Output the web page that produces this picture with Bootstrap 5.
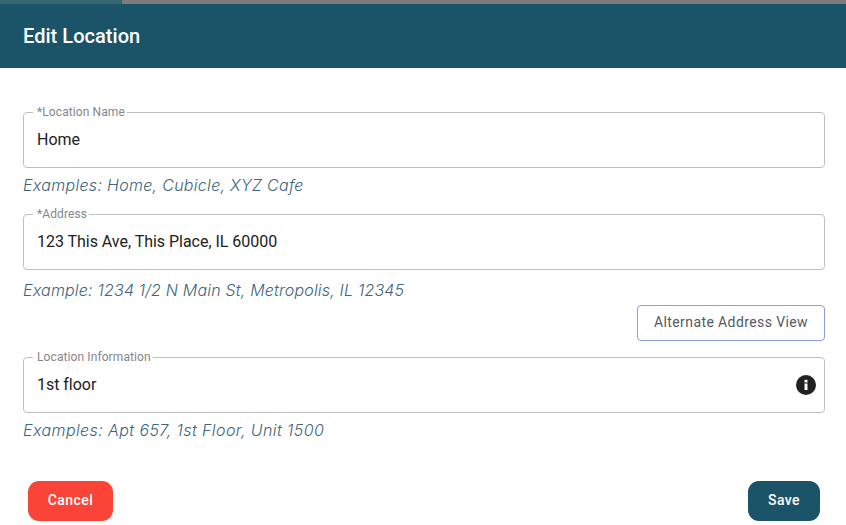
<!DOCTYPE html>
<html lang="en">
<head>
<meta charset="utf-8">
<title>Edit Location</title>
<link href="https://cdn.jsdelivr.net/npm/bootstrap@5.3.0/dist/css/bootstrap.min.css" rel="stylesheet">
<style>
html,body{height:100%;overflow:hidden;background:#fff;font-family:Roboto,sans-serif}
.top-strip{height:4px;background:#7b7b7b}
.top-strip-fill{width:122px;background:#35676f}
.dlg-head{height:64px;background:#1b5468;padding:0 23px}
.dlg-title{font:500 20px/1 Roboto,sans-serif;color:#fff;margin:0;letter-spacing:.04px}
.dlg-body{padding:44px 21px 0 23px}
.outfield{height:56px;border:1px solid #bfbfbf;border-radius:4px;padding:0 8px 0 13px}
.outlabel{position:absolute;left:9px;top:-8px;padding:0 2px 0 4px;background:#fff;font:400 12px/14px Roboto,sans-serif;color:#85858a;letter-spacing:.1px}
.outinput{border:0;outline:0;padding:0;background:transparent;font:400 16px/20px Roboto,sans-serif;color:#212121;letter-spacing:-.03px;min-width:0}
.hintline{font:italic 300 16px/20px Inter,sans-serif;color:#40647a;height:46px;padding-top:7px;white-space:nowrap;letter-spacing:.3px}
.hintshort{height:35px;padding-top:10px;letter-spacing:.19px}
.hintwide{letter-spacing:.41px}
.alt-btn{width:188px;height:36px;padding:0 0 2px;border:1px solid #8f9fdc;border-radius:4px;background:#fff;color:#4f5b62;font:400 14px/1 Roboto,sans-serif;letter-spacing:.4px}
.alt-wrap{margin-bottom:16px}
.dlg-foot{padding:0 26px 0 28px;margin-top:22px}
.act-btn{height:40px;border:0;border-radius:11px;color:#fff;font:500 14px/1 Roboto,sans-serif;padding:0 0 2px;letter-spacing:.45px}
.act-cancel{width:85px;background:#f94437}
.act-save{width:72px;background:#1b5468}
.info-ico{width:20px;height:20px;flex:none;display:block}
</style>
</head>
<body>
<div class="top-strip d-flex"><div class="top-strip-fill"></div></div>
<header class="dlg-head d-flex align-items-center"><h1 class="dlg-title">Edit Location</h1></header>
<main class="dlg-body">
  <div class="outfield position-relative d-flex align-items-center">
    <label class="outlabel" for="f1">*Location Name</label>
    <input class="outinput flex-grow-1" id="f1" value="Home">
  </div>
  <div class="hintline">Examples: Home, Cubicle, XYZ Cafe</div>
  <div class="outfield position-relative d-flex align-items-center">
    <label class="outlabel" for="f2">*Address</label>
    <input class="outinput flex-grow-1" id="f2" value="123 This Ave, This Place, IL 60000">
  </div>
  <div class="hintline hintshort">Example: 1234 1/2 N Main St, Metropolis, IL 12345</div>
  <div class="d-flex justify-content-end alt-wrap"><button type="button" class="btn alt-btn">Alternate Address View</button></div>
  <div class="outfield position-relative d-flex align-items-center">
    <label class="outlabel" for="f3">Location Information</label>
    <input class="outinput flex-grow-1" id="f3" value="1st floor">
    <svg class="info-ico" viewBox="0 0 20 20" aria-hidden="true"><circle cx="10" cy="10" r="10" fill="#212121"/><rect x="8.5" y="8.5" width="3" height="6.5" fill="#fff"/><rect x="8.5" y="4.8" width="3" height="2.7" fill="#fff"/></svg>
  </div>
  <div class="hintline hintwide">Examples: Apt 657, 1st Floor, Unit 1500</div>
</main>
<footer class="dlg-foot d-flex justify-content-between">
  <button type="button" class="btn act-btn act-cancel">Cancel</button>
  <button type="button" class="btn act-btn act-save">Save</button>
</footer>
<script src="https://cdn.jsdelivr.net/npm/bootstrap@5.3.0/dist/js/bootstrap.bundle.min.js"></script>
</body>
</html>
